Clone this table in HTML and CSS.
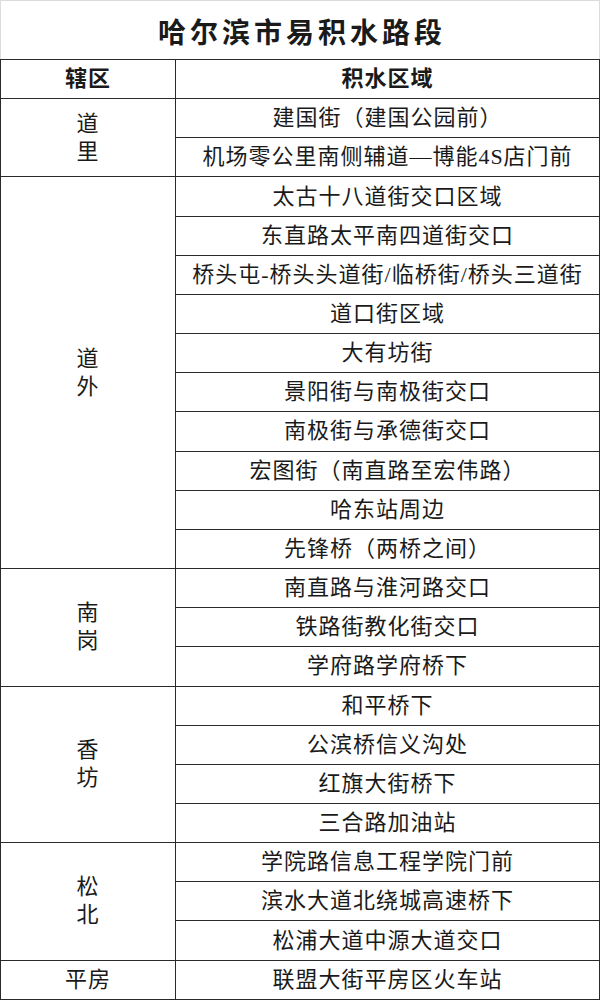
FILE: index.html
```html
<!DOCTYPE html>
<html lang="zh-CN">
<head>
<meta charset="utf-8">
<title>哈尔滨市易积水路段</title>
<link rel="stylesheet" href="styles.css">
</head>
<body>
<div class="sheet">
  <div class="title">哈尔滨市易积水路段</div>
  <table class="grid">
    <colgroup><col class="c-district"><col class="c-area"></colgroup>
    <thead>
      <tr><th>辖区</th><th>积水区域</th></tr>
    </thead>
    <tbody>
      <tr><td rowspan="2" class="district">道<br>里</td><td>建国街（建国公园前）</td></tr>
      <tr><td>机场零公里南侧辅道—博能4S店门前</td></tr>

      <tr><td rowspan="10" class="district">道<br>外</td><td>太古十八道街交口区域</td></tr>
      <tr><td>东直路太平南四道街交口</td></tr>
      <tr><td>桥头屯-桥头头道街/临桥街/桥头三道街</td></tr>
      <tr><td>道口街区域</td></tr>
      <tr><td>大有坊街</td></tr>
      <tr><td>景阳街与南极街交口</td></tr>
      <tr><td>南极街与承德街交口</td></tr>
      <tr><td>宏图街（南直路至宏伟路）</td></tr>
      <tr><td>哈东站周边</td></tr>
      <tr><td>先锋桥（两桥之间）</td></tr>

      <tr><td rowspan="3" class="district">南<br>岗</td><td>南直路与淮河路交口</td></tr>
      <tr><td>铁路街教化街交口</td></tr>
      <tr><td>学府路学府桥下</td></tr>

      <tr><td rowspan="4" class="district">香<br>坊</td><td>和平桥下</td></tr>
      <tr><td>公滨桥信义沟处</td></tr>
      <tr><td>红旗大街桥下</td></tr>
      <tr><td>三合路加油站</td></tr>

      <tr><td rowspan="3" class="district">松<br>北</td><td>学院路信息工程学院门前</td></tr>
      <tr><td>滨水大道北绕城高速桥下</td></tr>
      <tr><td>松浦大道中源大道交口</td></tr>

      <tr><td class="district">平房</td><td>联盟大街平房区火车站</td></tr>
    </tbody>
  </table>
</div>
</body>
</html>
```

FILE: styles.css
```css
html, body {
  margin: 0;
  padding: 0;
  background: #ffffff;
}

body {
  font-family: "Liberation Serif", "Noto Sans CJK SC", serif;
  color: #1a1a1a;
}

.sheet {
  width: 600px;
}

.title {
  box-sizing: border-box;
  height: 59px;
  border: 1px solid #dcdcdc;
  border-bottom: none;
  display: flex;
  align-items: center;
  justify-content: center;
  font-size: 28px;
  font-weight: bold;
  letter-spacing: 4px;
  padding-left: 4px;
  padding-top: 2px;
}

.grid {
  width: 600px;
  border-collapse: collapse;
  table-layout: fixed;
  border: 1px solid #222;
}

.c-district {
  width: 175px;
}

.grid tr {
  height: 39.17px;
}

.grid th,
.grid td {
  border: 1px solid #2a2a2a;
  padding: 0;
  text-align: center;
  vertical-align: middle;
  font-size: 22px;
  letter-spacing: 1px;
  line-height: 28px;
  white-space: nowrap;
  font-weight: normal;
}

.grid th {
  font-weight: bold;
}

.grid td.district {
  line-height: 28px;
}
```
